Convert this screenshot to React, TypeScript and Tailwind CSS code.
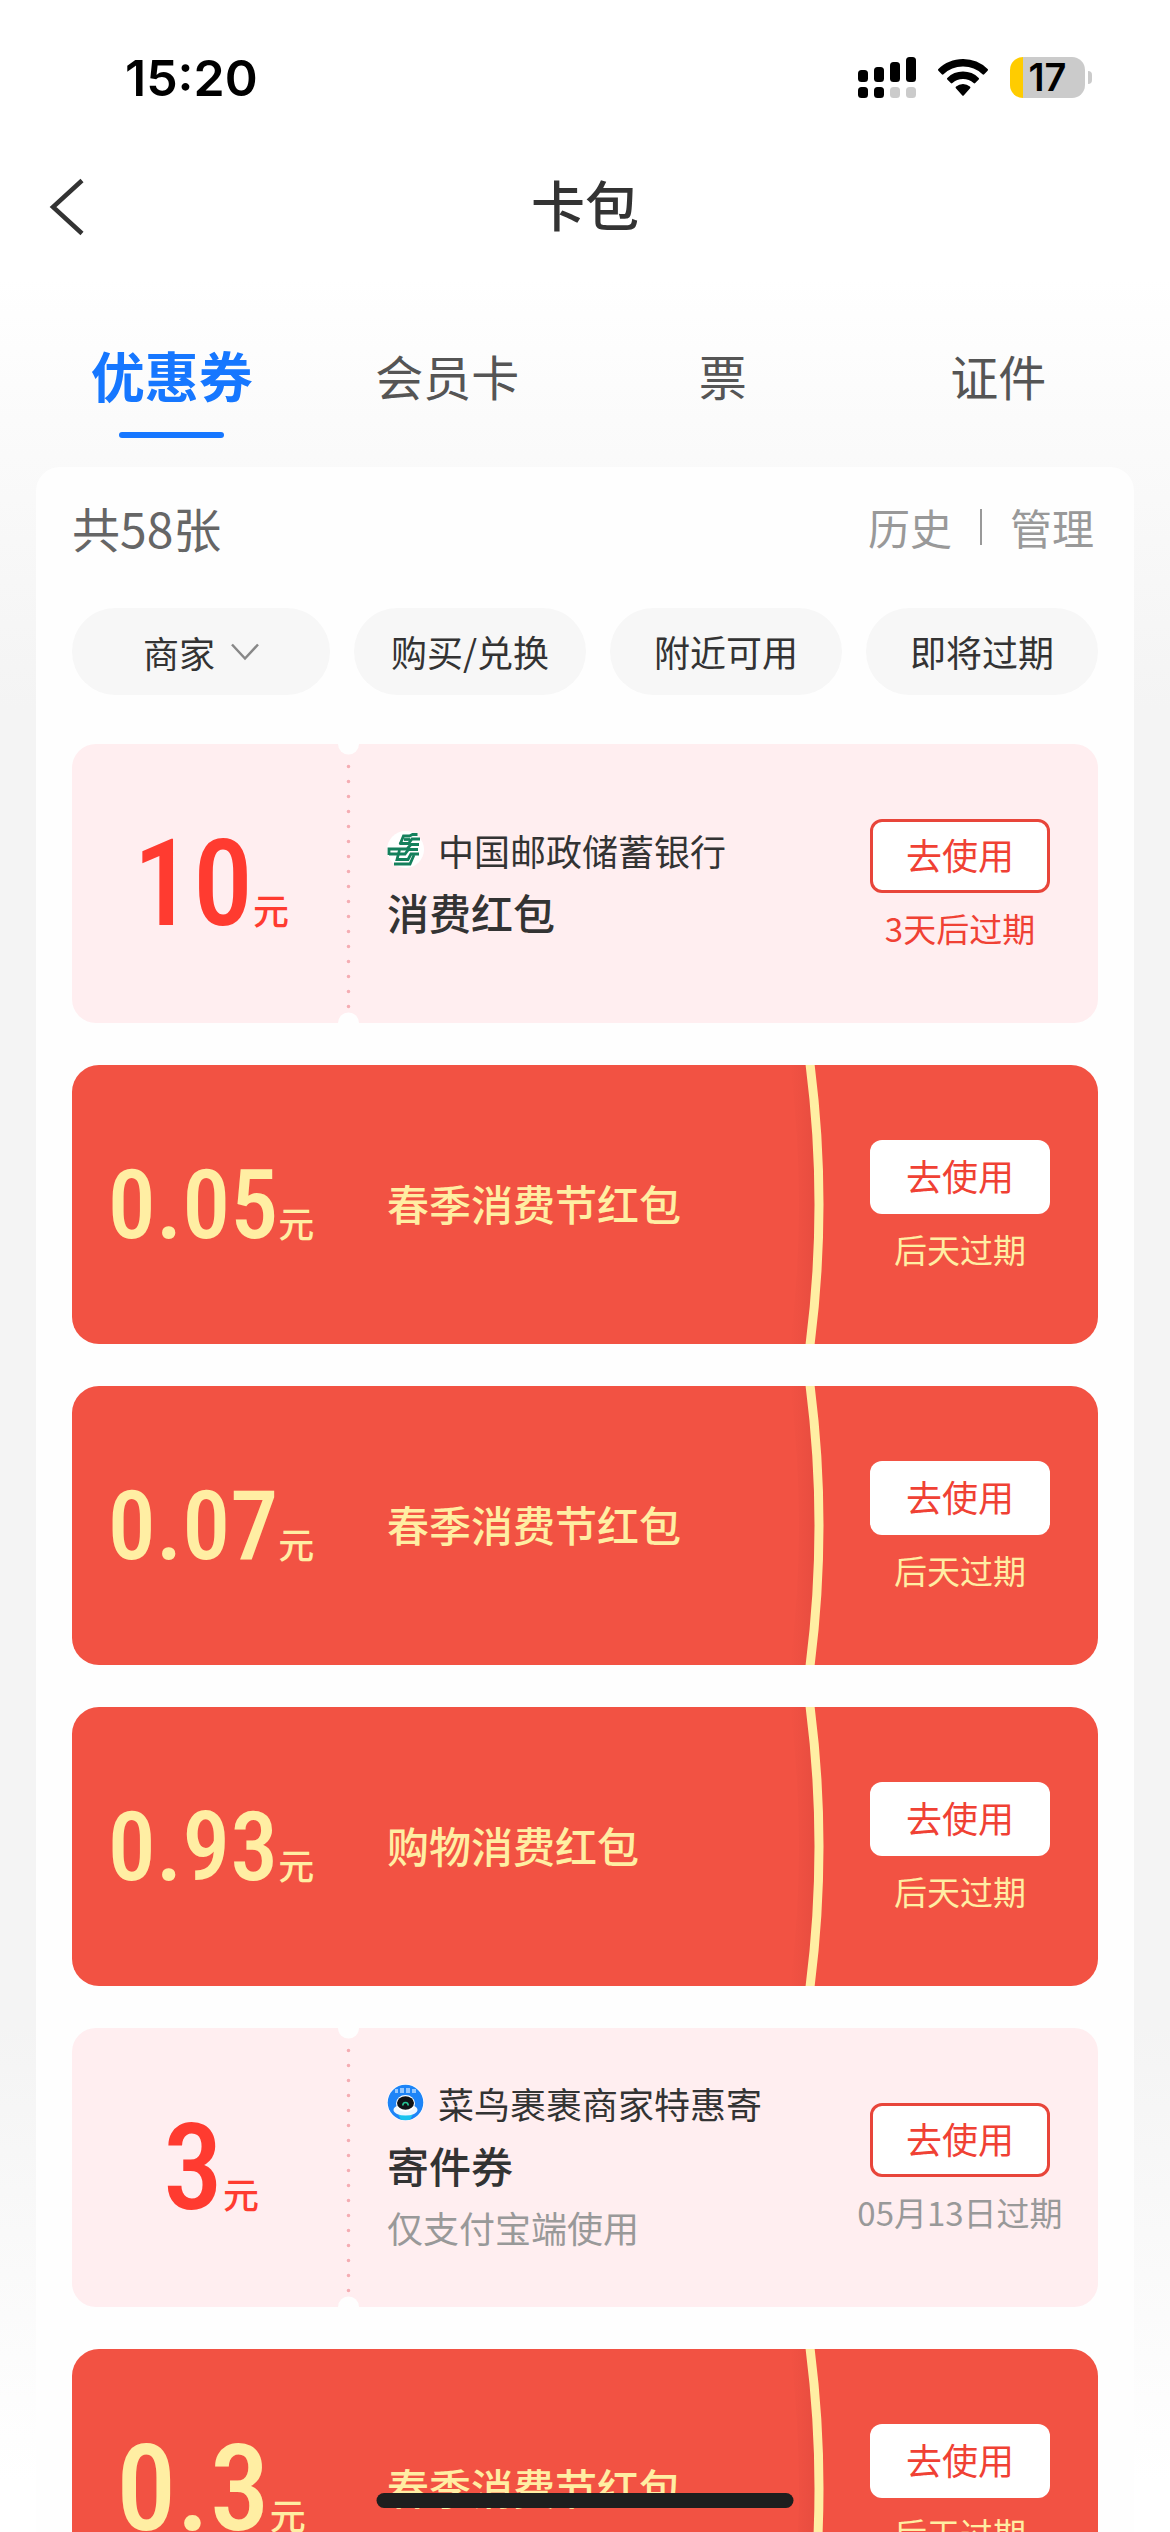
import { useState } from 'react';

type Coupon = {
  id: number;
  kind: 'ticket' | 'packet';
  amount: string;
  title: string;
  expire: string;
  urgent?: boolean;
  merchant?: string;
  logo?: 'bank' | 'cainiao';
  note?: string;
};

const TABS = ['优惠券', '会员卡', '票', '证件'];
const FILTERS = ['购买/兑换', '附近可用', '即将过期'];

const COUPONS: Coupon[] = [
  {
    id: 1,
    kind: 'ticket',
    amount: '10',
    title: '消费红包',
    merchant: '中国邮政储蓄银行',
    logo: 'bank',
    expire: '3天后过期',
    urgent: true,
  },
  { id: 2, kind: 'packet', amount: '0.05', title: '春季消费节红包', expire: '后天过期' },
  { id: 3, kind: 'packet', amount: '0.07', title: '春季消费节红包', expire: '后天过期' },
  { id: 4, kind: 'packet', amount: '0.93', title: '购物消费红包', expire: '后天过期' },
  {
    id: 5,
    kind: 'ticket',
    amount: '3',
    title: '寄件券',
    merchant: '菜鸟裹裹商家特惠寄',
    logo: 'cainiao',
    note: '仅支付宝端使用',
    expire: '05月13日过期',
  },
  { id: 6, kind: 'packet', amount: '0.3', title: '春季消费节红包', expire: '后天过期' },
];

function SignalIcon() {
  return (
    <svg width="58" height="41" viewBox="0 0 58 41" aria-hidden="true">
      <rect x="0" y="13" width="10" height="12" rx="3.5" />
      <rect x="16" y="10" width="10" height="15" rx="3.5" />
      <rect x="32" y="5" width="10" height="20" rx="3.5" />
      <rect x="48" y="0" width="10" height="25" rx="3.5" />
      <rect x="0" y="30" width="10" height="11" rx="3.5" />
      <rect x="16" y="30" width="10" height="11" rx="3.5" />
      <rect x="32" y="30" width="10" height="11" rx="3.5" fill="#cbcbcb" />
      <rect x="48" y="30" width="10" height="11" rx="3.5" fill="#cbcbcb" />
    </svg>
  );
}

function WifiIcon() {
  return (
    <svg width="50" height="37" viewBox="0 0 50 37" aria-hidden="true">
      <path d="M25 0C15.400 0 6.700 3.800.4 10a1.200 1.200 0 0 0 0 1.700l3.400 3.500a1.200 1.200 0 0 0 1.700 0A28 28 0 0 1 25 7.500a28 28 0 0 1 19.500 7.700 1.200 1.200 0 0 0 1.700 0l3.400-3.500a1.200 1.200 0 0 0 0-1.700A35 35 0 0 0 25 0Z" />
      <path d="M25 12.600a22.500 22.500 0 0 0-15.700 6.300 1.200 1.200 0 0 0 0 1.700l3.500 3.500a1.200 1.200 0 0 0 1.600 0A15.600 15.600 0 0 1 25 20a15.600 15.600 0 0 1 10.600 4.100 1.200 1.200 0 0 0 1.600 0l3.500-3.500a1.200 1.200 0 0 0 0-1.700A22.500 22.500 0 0 0 25 12.600Z" />
      <path d="M25 25a10.500 10.500 0 0 0-6.900 2.600 1.200 1.200 0 0 0 0 1.800l6 6.900a1.200 1.200 0 0 0 1.800 0l6-6.900a1.200 1.200 0 0 0 0-1.800A10.500 10.500 0 0 0 25 25Z" />
    </svg>
  );
}

function Battery() {
  return (
    <div className="flex items-center gap-[3px]">
      <div className="flex h-[41px] w-[75px] items-center justify-center rounded-[13px] bg-[linear-gradient(90deg,#ffcc00_13px,#cbcbcb_13px)] font-['Inter',sans-serif] text-[38px] leading-[41px] font-semibold">
        17
      </div>
      <div className="h-[13px] w-[4px] rounded-r-full bg-[#cbcbcb]" />
    </div>
  );
}

function StatusBar() {
  return (
    <div className="flex h-[155px] shrink-0 items-center justify-between pr-[78px] pl-[125px] text-black">
      <span className="font-['Inter',sans-serif] text-[50px] leading-[60px] font-semibold">15:20</span>
      <div className="flex items-center gap-[22px]">
        <SignalIcon />
        <WifiIcon />
        <Battery />
      </div>
    </div>
  );
}

function BankLogo() {
  return (
    <svg className="shrink-0" width="37" height="37" viewBox="0 0 37 37" aria-hidden="true">
      <circle cx="18.500" cy="18.500" r="18.500" fill="#fff" />
      <g fill="none" stroke="#14805c" strokeWidth="2.800">
        <path d="M13 13.500l3.500-8.500h6l3-1.500h5" />
        <path d="M12.500 12.500h9l3.500-4.500h8" />
        <path d="M17 8.500h6" />
        <path d="M2 24v-6h18l4-4.500h8" />
        <path d="M2 23h16l3.500-4.500h9.500" />
        <path d="M12.500 19l-2.500 9.500h11l3-5.500h8" />
        <path d="M7 33h16l4-9" />
      </g>
    </svg>
  );
}

function CainiaoLogo() {
  return (
    <svg className="shrink-0" width="37" height="37" viewBox="0 0 37 37" aria-hidden="true">
      <circle cx="18.500" cy="18.500" r="18.500" fill="#fff" />
      <circle cx="18.500" cy="18.500" r="17.800" fill="#1e84f7" />
      <path d="M8 5h3v4H8zM13 4h4v5h-4zM19 4h4v5h-4zM25 5h4v4h-4z" fill="#a9d2ff" opacity=".85" />
      <path d="M11 30h15l-3 6h-9z" fill="#19c3ee" />
      <ellipse cx="18.500" cy="26" rx="12" ry="5.500" fill="#eef7ff" />
      <ellipse cx="18.500" cy="19.500" rx="9.500" ry="8.500" fill="#fff" />
      <ellipse cx="18.500" cy="19" rx="8.500" ry="6.800" fill="#101418" />
      <path d="M15.800 21.500c0-4 5.400-4 5.400 0" fill="none" stroke="#27c795" strokeWidth="1.600" />
    </svg>
  );
}

function Perforation() {
  return (
    <svg className="absolute top-0 left-[266px]" width="21" height="279" viewBox="0 0 21 279" aria-hidden="true">
      <circle cx="10.500" cy="0" r="10.500" fill="#fefefe" />
      <circle cx="10.500" cy="279" r="10.500" fill="#fefefe" />
      <path d="M10.500 22.500V264" stroke="#f5adb3" strokeWidth="3.600" strokeLinecap="round" strokeDasharray="0 15" />
    </svg>
  );
}

function PacketEdge() {
  return (
    <svg className="shrink-0" width="60" height="279" viewBox="0 0 60 279" aria-hidden="true">
      <defs>
        <linearGradient id="edge-shade" x1="0" x2="1" y1="0" y2="0">
          <stop offset="0" stopColor="#e84d40" stopOpacity="0" />
          <stop offset="1" stopColor="#e54b3e" />
        </linearGradient>
      </defs>
      <path d="M5 0H25Q43 139.500 25 279H5Q23 139.500 5 0Z" fill="url(#edge-shade)" />
      <path d="M25 -1Q43 139.500 25 280" fill="none" stroke="#ffeea3" strokeWidth="9" />
    </svg>
  );
}

function Amount({ value, packet }: { value: string; packet: boolean }) {
  return (
    <div
      className={`flex w-[278px] shrink-0 items-baseline justify-center ${packet ? 'text-[#ffeea3]' : 'text-[#ff3b30]'}`}
    >
      <span
        className={`font-['Roboto_Condensed','Roboto',sans-serif] font-medium ${value.length > 3 ? 'text-[96px] leading-[112px]' : 'text-[120px] leading-[140px]'}`}
      >
        {value}
      </span>
      <span className="text-[36px] leading-[42px] font-medium">元</span>
    </div>
  );
}

function Action({ coupon }: { coupon: Coupon }) {
  const packet = coupon.kind === 'packet';
  const tone = packet ? 'text-[#ffeea3]' : coupon.urgent ? 'text-[#f04134]' : 'text-[#999999]';
  return (
    <div className="mr-[23px] flex w-[230px] shrink-0 flex-col items-center gap-4">
      <button
        className={`h-[74px] w-[180px] rounded-xl bg-white pb-1 text-[36px] leading-[42px] text-[#f04134] ${packet ? '' : 'border-[3px] border-[#e8453a]'}`}
      >
        去使用
      </button>
      <span className={`text-[33px] leading-[39px] whitespace-nowrap ${tone}`}>{coupon.expire}</span>
    </div>
  );
}

function CouponCard({ coupon }: { coupon: Coupon }) {
  if (coupon.kind === 'packet') {
    return (
      <li className="flex h-[279px] shrink-0 items-center overflow-hidden rounded-[27px] bg-[#f25243]">
        <Amount value={coupon.amount} packet />
        <h2 className="flex-1 pb-1 pl-[37px] text-[42px] leading-[62px] font-medium text-[#ffeea3]">{coupon.title}</h2>
        <PacketEdge />
        <Action coupon={coupon} />
      </li>
    );
  }

  return (
    <li className="relative flex h-[279px] shrink-0 items-center rounded-[24px] bg-[#ffeef0]">
      <Perforation />
      <Amount value={coupon.amount} packet={false} />
      <div className="flex-1 pb-1.5 pl-[37px]">
        <div className="flex items-center gap-[14px]">
          {coupon.logo === 'bank' ? <BankLogo /> : <CainiaoLogo />}
          <span className="text-[36px] leading-[62px] text-[#333333]">{coupon.merchant}</span>
        </div>
        <h2 className="text-[42px] leading-[62px] font-medium text-[#333333]">{coupon.title}</h2>
        {coupon.note && <p className="text-[36px] leading-[62px] text-[#999999]">{coupon.note}</p>}
      </div>
      <Action coupon={coupon} />
    </li>
  );
}

export default function App() {
  const [tab, setTab] = useState(TABS[0]);

  return (
    <div className="flex h-screen flex-col overflow-hidden bg-[linear-gradient(180deg,#ffffff_0%,#ffffff_11%,#fafafa_18%,#f4f4f4_28%,#f4f4f4_80%,#ffffff_98%)] font-['Noto_Sans_CJK_SC',sans-serif] text-[#333333]">
      <StatusBar />

      <header className="grid h-[104px] shrink-0 grid-cols-[1fr_auto_1fr] items-center px-12">
        <button aria-label="返回" className="justify-self-start">
          <svg width="38" height="58" viewBox="0 0 38 58" fill="none" aria-hidden="true">
            <path d="M34 2.500 5 29l29 26.500" stroke="#333" strokeWidth="4.500" />
          </svg>
        </button>
        <h1 className="pb-1.5 text-[54px] leading-[60px] font-medium">卡包</h1>
      </header>

      <nav className="grid h-[208px] shrink-0 grid-cols-4 px-[34px] pt-[86px]">
        {TABS.map((name) => (
          <button key={name} onClick={() => setTab(name)} className="flex flex-col items-center">
            <span
              className={`h-[60px] leading-[60px] ${name === tab ? 'text-[54px] font-bold text-[#1677ff]' : 'text-[48px] text-[#555555]'}`}
            >
              {name}
            </span>
            {name === tab && <span className="mt-[27px] h-1.5 w-[105px] rounded-full bg-[#1677ff]" />}
          </button>
        ))}
      </nav>

      <main className="mx-9 flex min-h-0 flex-1 flex-col rounded-t-[24px] bg-[#fefefe] px-9">
        <div className="mt-[30px] flex h-[60px] shrink-0 items-center justify-between pr-1">
          <span className="text-[48px] leading-[60px] text-[#666666]">共58张</span>
          <div className="flex items-center gap-7 text-[42px] leading-[60px] text-[#999999]">
            <a href="#history">历史</a>
            <span className="h-9 w-0.5 bg-[#999999]" />
            <a href="#manage">管理</a>
          </div>
        </div>

        <div className="mt-[51px] flex h-[87px] shrink-0 gap-6 text-[36px] leading-[42px] text-[#333333]">
          <button className="flex w-[258px] items-center justify-center gap-4 rounded-full bg-[#f7f7f7]">
            商家
            <svg width="28" height="18" viewBox="0 0 28 18" fill="none" aria-hidden="true">
              <path d="m1 1.500 13 14 13-14" stroke="#888" strokeWidth="2.500" />
            </svg>
          </button>
          {FILTERS.map((name) => (
            <button key={name} className="flex-1 rounded-full bg-[#f7f7f7] pb-0.5">
              {name}
            </button>
          ))}
        </div>

        <ul className="mt-[49px] flex min-h-0 flex-1 flex-col gap-[42px] overflow-y-auto [scrollbar-width:none]">
          {COUPONS.map((coupon) => (
            <CouponCard key={coupon.id} coupon={coupon} />
          ))}
        </ul>
      </main>

      {/* home indicator */}
      <div className="fixed bottom-6 left-1/2 h-[15px] w-[417px] -translate-x-1/2 rounded-full bg-[#1e1e1e]" />
    </div>
  );
}
